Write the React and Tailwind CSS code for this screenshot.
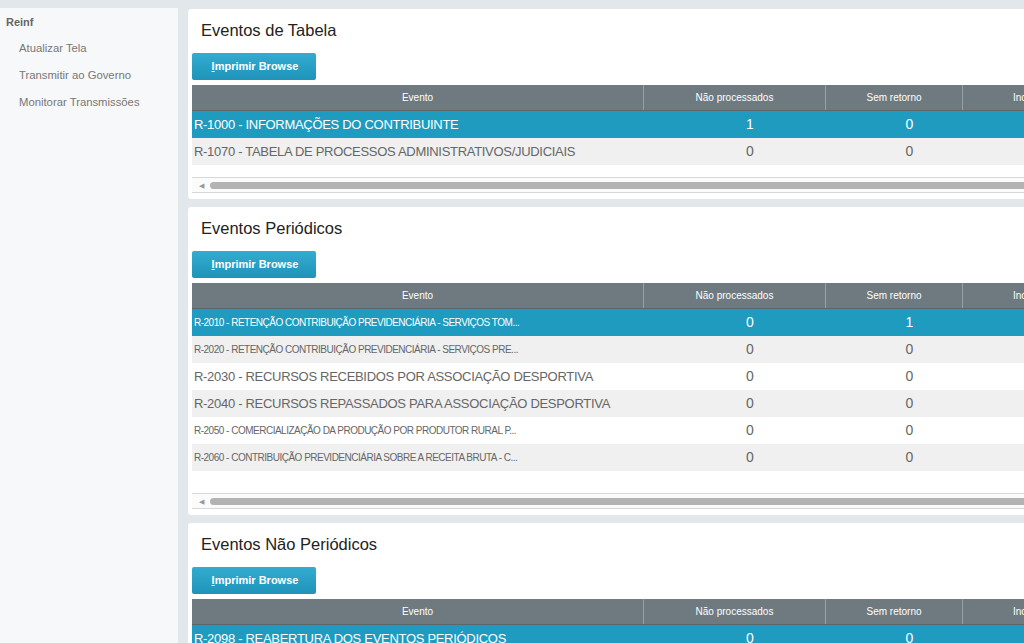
const tabela = [
  { name: 'R-1000 - INFORMAÇÕES DO CONTRIBUINTE', small: false, a: 1, b: 0 },
  { name: 'R-1070 - TABELA DE PROCESSOS ADMINISTRATIVOS/JUDICIAIS', small: false, a: 0, b: 0 },
]

const periodicos = [
  { name: 'R-2010 - RETENÇÃO CONTRIBUIÇÃO PREVIDENCIÁRIA - SERVIÇOS TOM...', small: true, a: 0, b: 1 },
  { name: 'R-2020 - RETENÇÃO CONTRIBUIÇÃO PREVIDENCIÁRIA - SERVIÇOS PRE...', small: true, a: 0, b: 0 },
  { name: 'R-2030 - RECURSOS RECEBIDOS POR ASSOCIAÇÃO DESPORTIVA', small: false, a: 0, b: 0 },
  { name: 'R-2040 - RECURSOS REPASSADOS PARA ASSOCIAÇÃO DESPORTIVA', small: false, a: 0, b: 0 },
  { name: 'R-2050 - COMERCIALIZAÇÃO DA PRODUÇÃO POR PRODUTOR RURAL P...', small: true, a: 0, b: 0 },
  { name: 'R-2060 - CONTRIBUIÇÃO PREVIDENCIÁRIA SOBRE A RECEITA BRUTA - C...', small: true, a: 0, b: 0 },
]

const naoPeriodicos = [
  { name: 'R-2098 - REABERTURA DOS EVENTOS PERIÓDICOS', small: false, a: 0, b: 0 },
]

function PrintButton() {
  return (
    <button className="w-[124px] h-[27px] rounded-[2px] bg-gradient-to-b from-[#33acd0] to-[#1f93b9] text-white text-[11px] font-bold pl-[2px]">
      <span className="underline">I</span>mprimir Browse
    </button>
  )
}

function Scroll() {
  return (
    <div className="w-[900px] h-[16px] border-t border-b border-[#d6d9db] bg-[#fbfbfb] flex items-center">
      <span className="w-[18px] text-center text-[7px] text-[#999] leading-none">◀</span>
      <div className="flex-1 h-[7px] rounded-l-full bg-[#b3b3b3]" />
    </div>
  )
}

function EventCard({ title, rows, scrollGap }) {
  return (
    <section className="w-[900px] bg-white rounded-[3px] pl-[4px] pt-[12px] pb-[6px] shrink-0">
      <h2 className="pl-[9px] text-[16.5px] leading-[18px] text-[#222]">{title}</h2>
      <div className="mt-[14px]">
        <PrintButton />
      </div>
      <div className="mt-[5px] w-[900px]">
        <div className="grid grid-cols-[451px_182px_137px_130px] h-[26px] bg-[#6e7a7f] border-b border-[#5c676b] text-white text-[10px]">
          <div className="flex items-center justify-center">Evento</div>
          <div className="flex items-center justify-center border-l border-[#97a0a4]">Não processados</div>
          <div className="flex items-center justify-center border-l border-[#97a0a4]">Sem retorno</div>
          <div className="flex items-center pl-[50px] border-l border-[#97a0a4]">Inconsistências</div>
        </div>
        {rows.map((r, i) => {
          const bg = i === 0 ? 'bg-[#1e9bbf] text-white' : i % 2 === 1 ? 'bg-[#f0f0f0] text-[#666]' : 'bg-white text-[#666]'
          return (
            <div key={r.name} className={`grid grid-cols-[451px_182px_137px_130px] h-[27px] items-center ${bg}`}>
              <div className={`pl-[2px] whitespace-nowrap ${r.small ? 'text-[10px] tracking-[-0.5px]' : 'text-[13px] tracking-[-0.3px]'}`}>{r.name}</div>
              <div className="text-center pl-8 text-[14px]">{r.a}</div>
              <div className="text-center pl-8 text-[14px]">{r.b}</div>
              <div />
            </div>
          )
        })}
      </div>
      <div className={scrollGap}>
        <Scroll />
      </div>
    </section>
  )
}

export default function App() {
  return (
    <div className="w-[1024px] h-[643px] overflow-hidden bg-[#e2e7eb] pt-2 flex font-['Liberation_Sans',Arial,sans-serif]">
      <aside className="w-[178px] shrink-0 bg-[#f7f8f9] pt-[7px]">
        <div className="pl-[6px] text-[11px] font-bold text-[#666] leading-[14px]">Reinf</div>
        <nav className="flex flex-col mt-[6px]">
          {['Atualizar Tela', 'Transmitir ao Governo', 'Monitorar Transmissões'].map((t) => (
            <div key={t} className="pl-[19px] h-[27px] flex items-center text-[11.3px] text-[#777]">{t}</div>
          ))}
        </nav>
      </aside>
      <main className="flex-1 overflow-hidden pl-[10px] pt-px flex flex-col gap-2">
        <EventCard title="Eventos de Tabela" rows={tabela} scrollGap="mt-[12px]" />
        <EventCard title="Eventos Periódicos" rows={periodicos} scrollGap="mt-[22px]" />
        <EventCard title="Eventos Não Periódicos" rows={naoPeriodicos} scrollGap="mt-[22px]" />
      </main>
    </div>
  )
}
